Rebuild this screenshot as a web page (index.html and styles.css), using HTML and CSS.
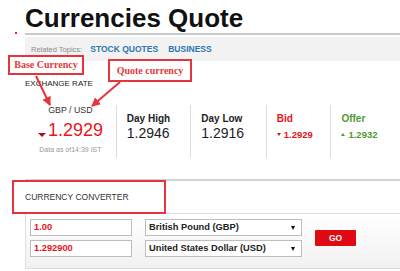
FILE: index.html
```html
<!DOCTYPE html>
<html lang="en">
<head>
<meta charset="UTF-8">
<link rel="stylesheet" href="styles.css">
</head>
<body>
  <div class="page">
    <h1 class="title">Currencies Quote</h1>
    <div class="rule_row">
      <span class="red_dot"></span>
      <div class="rule"></div>
    </div>
    <div class="topics">
      <span class="topics_label">Related Topics:</span>
      <a class="topic_link">STOCK QUOTES</a>
      <a class="topic_link">BUSINESS</a>
    </div>

    <div class="rate_label">EXCHANGE RATE</div>

    <div class="quotes">
      <div class="quote_main">
        <div class="pair">GBP / USD</div>
        <div class="price"><span class="arrow_down_big"></span>1.2929</div>
        <div class="stamp">Data as of14:39 IST</div>
      </div>
      <div class="quote_col col_high">
        <div class="quote_name">Day High</div>
        <div class="quote_value">1.2946</div>
      </div>
      <div class="quote_col col_low">
        <div class="quote_name">Day Low</div>
        <div class="quote_value">1.2916</div>
      </div>
      <div class="quote_col col_bid">
        <div class="quote_name text_red">Bid</div>
        <div class="quote_small text_red"><span class="arrow_down_small"></span>1.2929</div>
      </div>
      <div class="quote_col col_offer">
        <div class="quote_name text_green">Offer</div>
        <div class="quote_small text_green"><span class="arrow_up_small"></span>1.2932</div>
      </div>
    </div>

    <div class="converter">
      <div class="converter_head">CURRENCY CONVERTER</div>
      <div class="converter_body">
        <div class="field_col">
          <div class="field amount">1.00</div>
          <div class="field amount">1.292900</div>
        </div>
        <div class="field_col">
          <div class="field picker">British Pound (GBP)<span class="caret"></span></div>
          <div class="field picker">United States Dollar (USD)<span class="caret"></span></div>
        </div>
        <div class="go_button">GO</div>
      </div>
    </div>

    <!-- annotations drawn over the screenshot -->
    <svg class="arrows" width="400" height="271" viewBox="0 0 400 271">
      <defs>
        <marker id="head" markerWidth="9" markerHeight="9" refX="8" refY="4.5" orient="auto" markerUnits="userSpaceOnUse">
          <path d="M0,0 L9,4.5 L0,9 z" fill="#e5343b"/>
        </marker>
      </defs>
      <line x1="36" y1="76" x2="50" y2="105" stroke="#e5343b" stroke-width="2" marker-end="url(#head)"/>
      <line x1="120" y1="82" x2="92" y2="106" stroke="#e5343b" stroke-width="2" marker-end="url(#head)"/>
    </svg>
    <div class="note note_base">Base Currency</div>
    <div class="note note_quote">Quote currency</div>
    <div class="note_frame"></div>
  </div>
</body>
</html>
```

FILE: styles.css
```css
body {
  margin: 0;
  background: #fff;
  font-family: "Liberation Sans", Arial, sans-serif;
  color: #222;
  overflow: hidden;
}

.page {
  position: relative;
  width: 400px;
  height: 271px;
  overflow: hidden;
  padding-left: 25px;
  box-sizing: border-box;
}

.title {
  margin: 0;
  padding-top: 3px;
  font-size: 26px;
  line-height: 30px;
  font-weight: bold;
  color: #111;
}

.rule_row {
  display: flex;
  align-items: flex-start;
  margin-left: -10px;
}

.red_dot {
  width: 2px;
  height: 2px;
  margin-top: -1px;
  margin-right: 8px;
  background: #e3262d;
}

.rule {
  flex: 1;
  height: 2px;
  background: #c9c9c9;
}

.topics {
  margin-top: 2px;
  height: 24px;
  line-height: 24px;
  padding-left: 6px;
  background: #f2f2f2;
  font-size: 7.5px;
}

.topics_label {
  color: #8a8a8a;
  margin-right: 6px;
}

.topic_link {
  color: #2c76ae;
  font-weight: bold;
  font-size: 8.5px;
  margin-right: 8px;
}

.rate_label {
  margin-top: 18px;
  font-size: 8px;
  line-height: 10px;
  color: #222;
}

.quotes {
  display: flex;
  margin-top: 16px;
  height: 53px;
}

.quote_main {
  width: 93px;
  text-align: center;
  border-right: 1px solid #dcdcdc;
}

.pair {
  font-size: 8.8px;
  line-height: 10px;
  color: #333;
}

.price {
  margin-top: 5px;
  font-size: 18px;
  line-height: 20px;
  color: #e8141b;
}

.arrow_down_big {
  display: inline-block;
  width: 0;
  height: 0;
  border-left: 4px solid transparent;
  border-right: 4px solid transparent;
  border-top: 4px solid #b0101a;
  margin-right: 2px;
  vertical-align: -1px;
}

.stamp {
  margin-top: 5px;
  font-size: 7px;
  line-height: 10px;
  color: #9a9a9a;
}

.quote_col {
  padding-top: 8px;
  padding-left: 10px;
  border-right: 1px solid #dcdcdc;
}

.col_high { width: 65px; }
.col_low { width: 66px; }
.col_bid { width: 55px; }
.col_offer { width: 60px; border-right: none; }

.quote_name {
  font-size: 10px;
  line-height: 12px;
  font-weight: bold;
  color: #222;
}

.quote_value {
  font-size: 14px;
  line-height: 16px;
  color: #1c1c28;
}

.quote_small {
  margin-top: 4px;
  font-size: 9.5px;
  line-height: 12px;
  font-weight: bold;
}

.text_red { color: #e5141b; }
.text_green { color: #4f9a32; }

.arrow_down_small,
.arrow_up_small {
  display: inline-block;
  width: 0;
  height: 0;
  border-left: 2.5px solid transparent;
  border-right: 2.5px solid transparent;
  margin-right: 3px;
  vertical-align: 2px;
}

.arrow_down_small { border-top: 3px solid #e5141b; }
.arrow_up_small { border-bottom: 3px solid #4f9a32; }

.converter {
  margin-top: 21px;
  margin-right: -10px;
  border-top: 2px solid #d3d3d3;
}

.converter_head {
  height: 32px;
  line-height: 32px;
  font-size: 8.5px;
  color: #333;
}

.converter_body {
  display: flex;
  align-items: center;
  gap: 13px;
  padding: 5px 0 11px 4px;
  border: 1px solid #dedede;
  background: linear-gradient(#fff, #f1f1f1);
}

.field_col {
  display: flex;
  flex-direction: column;
  gap: 4px;
}

.field {
  height: 17px;
  box-sizing: border-box;
  border: 1px solid #bdbdbd;
  background: #fff;
  padding-left: 3px;
  font-size: 9.3px;
  line-height: 15px;
  font-weight: bold;
}

.amount {
  width: 102px;
  color: #e8141b;
}

.picker {
  width: 157px;
  color: #222;
  display: flex;
  justify-content: space-between;
  align-items: center;
}

.caret {
  width: 0;
  height: 0;
  border-left: 2.5px solid transparent;
  border-right: 2.5px solid transparent;
  border-top: 4px solid #111;
  margin-right: 6px;
}

.go_button {
  width: 41px;
  height: 16px;
  line-height: 16px;
  text-align: center;
  background: #df0a12;
  color: #fff;
  font-size: 8.5px;
  font-weight: bold;
  border-radius: 1px;
}

.arrows {
  position: absolute;
  left: 0;
  top: 0;
  pointer-events: none;
}

.note {
  position: absolute;
  box-sizing: border-box;
  border: 2px solid #e5343b;
  background: #fff;
  color: #e23a40;
  font-family: "Liberation Serif", "Times New Roman", serif;
  font-weight: bold;
  font-size: 10px;
  text-align: center;
}

.note_base {
  left: 8px;
  top: 55px;
  width: 76px;
  height: 20px;
  line-height: 16px;
}

.note_quote {
  left: 108px;
  top: 59px;
  width: 84px;
  height: 23px;
  line-height: 19px;
}

.note_frame {
  position: absolute;
  left: 12px;
  top: 180px;
  width: 154px;
  height: 34px;
  box-sizing: border-box;
  border: 2px solid #e5343b;
}
```
